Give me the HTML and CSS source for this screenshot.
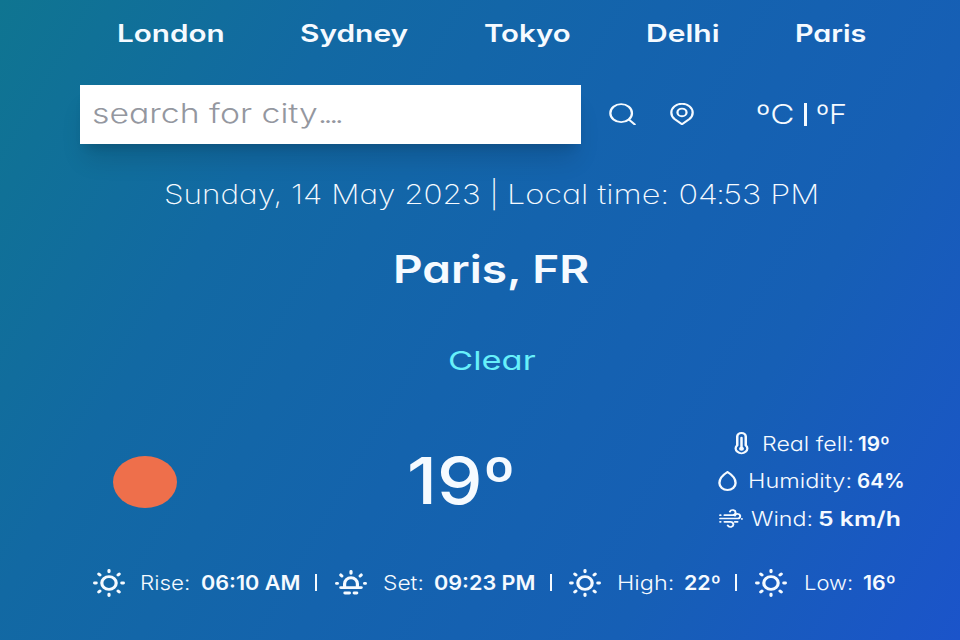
FILE: index.html
```html
<!DOCTYPE html>
<html lang="en">
<head>
<meta charset="utf-8">
<title>Weather</title>
<link rel="stylesheet" href="styles.css">
</head>
<body>
<svg class="defs" aria-hidden="true">
  <symbol id="sun" viewBox="2 2 20 20" preserveAspectRatio="none">
    <circle cx="12" cy="12" r="4.5"/>
    <path d="M12 3v1M12 20v1M3 12h1M20 12h1M5.6 5.6l.75.75M17.65 17.65l.75.75M5.6 18.4l.75-.75M17.65 6.35l.75-.75"/>
  </symbol>
</svg>
<main class="app">
  <nav class="cities">
    <a class="t london">London</a>
    <a class="t sydney">Sydney</a>
    <a class="t tokyo">Tokyo</a>
    <a class="t delhi">Delhi</a>
    <a class="t paris">Paris</a>
  </nav>

  <section class="search">
    <div class="field"><span class="t hint">search for city<span class="dots">....</span></span></div>
    <svg class="icon find" viewBox="2 2 20 20" preserveAspectRatio="none"><circle cx="11" cy="11" r="8"/><path d="M16.8 16.8L21 21"/></svg>
    <svg class="icon pin" viewBox="3 2 18 20" preserveAspectRatio="none"><path d="M12 20.8l-5.6-4.6a8 7.9 0 1 1 11.2 0z"/><circle cx="12" cy="10.4" r="3.4"/></svg>
    <div class="units"><span class="t cel">ºC</span><span class="bar"></span><span class="t fah">ºF</span></div>
  </section>

  <p class="date"><span class="t day">Sunday, 14 May 2023 |</span><span class="t time">Local time: 04<span class="colon">:</span>53 PM</span></p>
  <h1 class="place"><span class="t">Paris, FR</span></h1>
  <p class="sky"><span class="t">Clear</span></p>

  <section class="now">
    <div class="disc"></div>
    <p class="temp"><span class="t">19º</span></p>
    <ul class="details">
      <li class="feel">
        <svg class="icon" viewBox="6 1 12 22" preserveAspectRatio="none"><path d="M8.6 13.6V5.4a3.4 3.4 0 0 1 6.8 0v8.2a4.6 4.6 0 1 1-6.8 0zM12 6.5V16"/><circle cx="12" cy="17" r="1"/></svg>
        <span class="t k">Real fell:</span><b class="t">19º</b>
      </li>
      <li class="humid">
        <svg class="icon" viewBox="4 2 16 20" preserveAspectRatio="none"><path d="M12 3c3 2.2 6.800 6.200 6.800 11a6.800 7 0 0 1-13.600 0C5.200 9.200 9 5.200 12 3z"/></svg>
        <span class="t k">Humidity:</span><b class="t">64%</b>
      </li>
      <li class="wind">
        <svg class="icon" viewBox="1 2 22 20" preserveAspectRatio="none"><path d="M6 8.500h7.500a2.700 2.700 0 1 0-2.500-3.800M2 8.500h.5M2 12h16a2.400 2.400 0 1 0-2.300-3M22 12.300v.2M6 15.500h5.500a2.700 2.700 0 1 1-2.500 3.800M2 15.500h.5M15.500 15.500h2.500"/></svg>
        <span class="t k">Wind:</span><b class="t">5 km/h</b>
      </li>
    </ul>
  </section>

  <section class="day-stats">
    <svg class="icon"><use href="#sun"/></svg>
    <span class="t rise">Rise:</span><b class="t clock">06:10 AM</b><i class="sep"></i>
    <svg class="icon set-icon" viewBox="2 4 20 17" preserveAspectRatio="none"><path d="M5.600 16.200h12.800M8 16v-2.400a4 4.200 0 0 1 8 0V16M12 5v1.300M3 13.300h.5M20.500 13.300h.5M5.600 7.400l.7.700M18.400 7.400l-.7.700M8.200 20h2.800M14 20h1.600"/></svg>
    <span class="t set">Set:</span><b class="t clock">09:23 PM</b><i class="sep"></i>
    <svg class="icon"><use href="#sun"/></svg>
    <span class="t high">High:</span><b class="t deg">22º</b><i class="sep"></i>
    <svg class="icon"><use href="#sun"/></svg>
    <span class="t low">Low:</span><b class="t deg">16º</b>
  </section>
</main>
</body>
</html>
```
FILE: styles.css
```css
* { box-sizing: border-box; margin: 0; padding: 0; }

body {
  width: 960px;
  height: 640px;
  overflow: hidden;
  color: #f5faff;
  font-family: Inter, "Open Sans", sans-serif;
  font-feature-settings: "cv11";
  background: linear-gradient(120deg, #0f7591, #1269a3 26%, #1463ad 50%, #165fb5 74%, #1b54ca);
}

.defs { display: block; width: 0; height: 0; }

.app { display: flex; flex-direction: column; }

/* wide lettering */
.t {
  display: inline-block;
  white-space: nowrap;
  transform-origin: 0 50%;
}

.icon {
  fill: none;
  stroke: currentColor;
  stroke-width: 2;
  stroke-linecap: round;
  stroke-linejoin: round;
}

.cities {
  display: grid;
  grid-template-columns: 183px 184px 162px 148.5px 90px;
  align-items: center;
  height: 67px;
  padding-left: 117px;
  font-size: 24px;
  font-weight: 600;
}
.london { transform: scaleX(1.235); }
.sydney { transform: scaleX(1.245); }
.tokyo { transform: scaleX(1.225); }
.delhi { transform: scaleX(1.25); }
.paris { transform: scaleX(1.2); }

.search {
  display: flex;
  align-items: center;
  height: 59px;
  margin-top: 18px;
  padding-left: 80px;
}
.field {
  width: 501px;
  height: 59px;
  padding-left: 11.5px;
  background: #fff;
  color: #94979f;
  font-size: 27px;
  font-weight: 300;
  line-height: 57px;
  box-shadow: 0 20px 25px -5px rgba(0, 0, 0, .12), 0 8px 10px -6px rgba(0, 0, 0, .14);
}
.hint { transform: scaleX(1.25); }
.dots { letter-spacing: -3.2px; }
.find { width: 27px; height: 22.5px; margin: 0 0 1px 28px; stroke-width: 1.7; }
.pin { width: 24px; height: 22.5px; margin: 0 0 1px 33.5px; stroke-width: 1.7; }
.units {
  display: grid;
  grid-template-columns: 47.5px 12.5px 40px;
  align-items: center;
  margin-left: 62.5px;
  font-size: 27px;
  font-weight: 300;
  line-height: 57px;
  height: 59px;
}
.cel { transform: scaleX(1.23); }
.fah { transform: scaleX(1.13); }
.bar { width: 3px; height: 23px; background: currentColor; }

.date {
  display: grid;
  grid-template-columns: 342.5px 320px;
  height: 40px;
  margin-top: 30.5px;
  padding-left: 164px;
  font-size: 27px;
  font-weight: 250;
  line-height: 40px;
}
.day { transform: scaleX(1.165); }
.time { transform: scaleX(1.2); }
.colon { margin: 0 -1.5px; }

.place {
  height: 50px;
  margin-top: 29px;
  padding-left: 392.5px;
  font-size: 38px;
  font-weight: 600;
  line-height: 50px;
}
.place .t { transform: scaleX(1.21); }

.sky {
  height: 40px;
  margin-top: 47px;
  padding-left: 447.5px;
  color: #67f0fa;
  font-size: 26px;
  font-weight: 400;
  line-height: 40px;
}
.sky .t { transform: scaleX(1.325); }

.now {
  display: grid;
  grid-template-columns: 294px 310px 200px;
  align-items: center;
  height: 114px;
  margin-top: 43.5px;
  padding-left: 113px;
}
.disc { width: 64px; height: 52px; margin-top: 2px; border-radius: 50%; background: #ee6f4b; }
.temp { font-size: 65px; font-weight: 500; line-height: 100px; }
.temp .t { transform: scaleX(1.11); }

.details { list-style: none; font-size: 20px; }
.details li { display: grid; align-items: center; height: 37.5px; }
.k { font-weight: 300; }
.details b, .day-stats b { font-weight: 600; }
.feel { grid-template-columns: 28px 96.5px 40px; padding-left: 16.5px; }
.feel .icon { width: 15px; height: 23px; }
.feel .k { transform: scaleX(1.16); }
.feel b { transform: scaleX(1.04); }
.humid { grid-template-columns: 30px 109.5px 50px; padding-left: .5px; }
.humid .icon { width: 19px; height: 20px; }
.humid .k { transform: scaleX(1.175); }
.humid b { transform: scaleX(1.03); }
.wind { grid-template-columns: 32.5px 67px 80px; padding-left: 1.5px; }
.wind .icon { width: 24px; height: 19px; stroke-width: 1.8; }
.wind .k { transform: scaleX(1.16); }
.wind b { transform: scaleX(1.24); }

.day-stats {
  display: grid;
  grid-template-columns: 47px 61px 114.5px 19.5px 48.5px 50.5px 116px 19px 48px 67.5px 51px 20px 48.5px 59px 50px;
  align-items: center;
  height: 40px;
  margin-top: 24.5px;
  padding-left: 92.5px;
  font-size: 20px;
  font-weight: 300;
}
.day-stats .icon { width: 32px; height: 28px; }
.day-stats .set-icon { height: 24.5px; }
.sep { width: 2px; height: 17px; background: currentColor; }
.rise { transform: scaleX(1.12); }
.set { transform: scaleX(1.14); }
.high { transform: scaleX(1.17); }
.low { transform: scaleX(1.1); }
.clock { transform: scaleX(1.08); }
.deg { transform: scaleX(1.07); }
```
